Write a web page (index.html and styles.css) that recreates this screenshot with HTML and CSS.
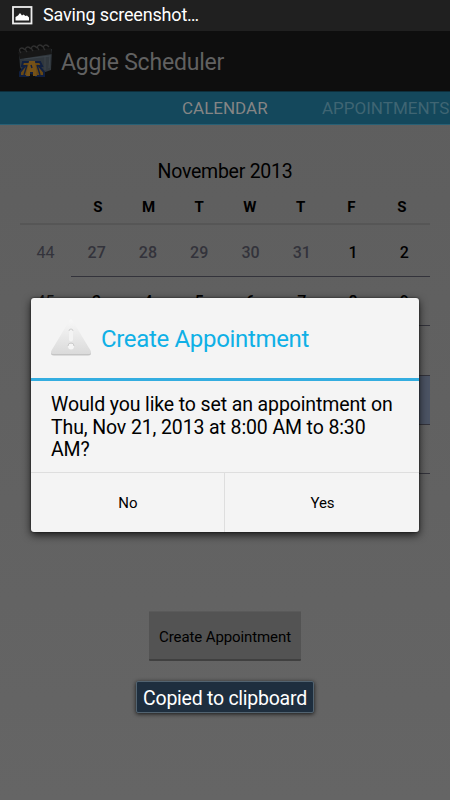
FILE: index.html
```
<!DOCTYPE html>
<html lang="en">
<head>
    <title>Aggie Scheduler</title>
    <meta charset="UTF-8" />
    <meta name="viewport" content="width=device-width, initial-scale=1.0" />
    <link rel="stylesheet" href="styles.css">
</head>
<body>
    <div class="status-bar">
        <svg class="status-icon" width="21" height="19" viewBox="0 0 21 19">
            <rect x="1" y="1" width="18.5" height="16.5" fill="#222" stroke="#eee" stroke-width="1.8"/>
            <path d="M3.500 14.500V11L6 9.500 8 7l2 2.500 1.500-1 2 1.500 1.500-.5L17 11.500v3z" fill="#fff"/>
        </svg>
        <span class="status-text">Saving screenshot…</span>
    </div>

    <header class="action-bar">
        <svg class="app-logo" width="38" height="36" viewBox="0 0 38 36">
            <path d="M2 8L35 5l-1 21-14 5-14-2-3-6z" fill="#30373d"/>
            <path d="M33 11l-1 13M28 12v14M7 15l26-3" stroke="#3c444b" stroke-width="1" fill="none"/>
            <path d="M1 8L34 4l1 6-32 5z" fill="#171717"/>
            <g fill="none" stroke="#303030" stroke-width="1.3">
                <path d="M4 9c-4-4 1-7 4-3M10 8c-4-4 1-7 4-3M16 7c-4-4 1-7 4-3M22 6c-4-4 1-7 4-3M28 6c-4-4 1-7 4-3"/>
            </g>
            <path d="M6 18h17l2 4h-3l5 6v4h-8l-1-3h-6l-1 3H3v-4l5-6H5z" fill="#694914" stroke="#101f40" stroke-width="2"/>
            <path d="M12 17h6l2 15h-4v-4h-3v4H9z" fill="#765218"/>
            <path d="M10 21L7 31M20 21l3 10M14 21l1 3" stroke="#101f40" stroke-width="1.400" fill="none"/>
        </svg>
        <h1 class="app-title">Aggie Scheduler</h1>
    </header>

    <nav class="tabs">
        <span class="tab tab-current">CALENDAR</span>
        <span class="tab tab-next">APPOINTMENTS</span>
    </nav>

    <main>
        <h2 class="month">November 2013</h2>
        <div class="weekdays">
            <span></span><span>S</span><span>M</span><span>T</span><span>W</span><span>T</span><span>F</span><span>S</span>
        </div>
        <div class="week week-first">
            <span class="week-number">44</span>
            <div class="days">
                <span class="other">27</span><span class="other">28</span><span class="other">29</span><span class="other">30</span><span class="other">31</span><span>1</span><span>2</span>
            </div>
        </div>
        <div class="week">
            <span class="week-number week-focused">45</span>
            <div class="days"><span>3</span><span>4</span><span>5</span><span>6</span><span>7</span><span>8</span><span>9</span></div>
        </div>
        <div class="week">
            <span class="week-number"></span>
            <div class="days"></div>
        </div>
        <div class="week">
            <span class="week-number"></span>
            <div class="days selected"></div>
        </div>
        <div class="week">
            <span class="week-number"></span>
            <div class="days"></div>
        </div>
        <button class="create-button">Create Appointment</button>
    </main>

    <div class="dialog">
        <div class="dialog-header">
            <svg width="42" height="38" viewBox="0 0 42 38">
                <defs>
                    <linearGradient id="alert" x1="0" y1="0" x2="0" y2="1">
                        <stop offset="0" stop-color="#f8f8f8"/>
                        <stop offset="1" stop-color="#dadada"/>
                    </linearGradient>
                </defs>
                <path d="M19.500 3Q21 1 22.500 3L40.500 33Q42 36.500 38 36.500H4Q0 36.500 1.500 33z" fill="#c4c4c4"/>
                <path d="M19.500 1.500Q21-1 22.500 1.500L40.500 31.500Q42 35 38 35H4Q0 35 1.500 31.500z" fill="url(#alert)"/>
                <rect x="19" y="10" width="4" height="12.500" rx="2" fill="#f3f3f3"/>
                <path d="M19 12q0-2 2-2t2 2" fill="none" stroke="#cfcfcf"/>
                <circle cx="21" cy="27.500" r="3" fill="#f5f5f5"/>
                <path d="M18 27q0-3 3-3t3 3" fill="none" stroke="#cbcbcb"/>
            </svg>
            <h2 class="dialog-title">Create Appointment</h2>
        </div>
        <p class="dialog-message">Would you like to set an appointment on<br>Thu, Nov 21, 2013 at 8:00 AM to 8:30<br>AM?</p>
        <div class="dialog-buttons">
            <button>No</button>
            <button>Yes</button>
        </div>
    </div>

    <div class="toast">Copied to clipboard</div>
</body>
</html>
```
FILE: styles.css
```
* {
    margin: 0;
    padding: 0;
    box-sizing: border-box;
}

body {
    position: relative;
    width: 450px;
    height: 800px;
    overflow: hidden;
    font-family: Roboto, sans-serif;
    color: #000;
    background: linear-gradient(#5d5d5d, #656565);
}

button {
    font-family: inherit;
    color: #000;
    border: none;
    background: none;
}

.status-bar {
    display: flex;
    align-items: center;
    height: 31px;
    padding: 0 0 2px 12px;
    background: #202020;
}

.status-icon {
    margin-top: 2px;
}

.status-text {
    margin-left: 10px;
    font-size: 18px;
    letter-spacing: -0.17px;
    color: #fff;
}

.action-bar {
    display: flex;
    align-items: center;
    height: 60px;
    padding-left: 17px;
    background: #0e0e0e;
}

.app-logo {
    margin-top: 2px;
}

.app-title {
    margin-left: 6px;
    padding-top: 2px;
    font-size: 23px;
    font-weight: 400;
    letter-spacing: -0.2px;
    color: #616161;
}

.tabs {
    display: flex;
    align-items: center;
    height: 34px;
    padding: 0 0 0 182px;
    font-size: 17px;
    background: #14485c;
    border-top: 1px solid #0d2e3b;
    border-bottom: 1px solid #286075;
}

.tab {
    white-space: nowrap;
}

.tab-current {
    width: 140px;
    color: #858585;
}

.tab-next {
    color: #3f6573;
}

main {
    display: flex;
    flex-direction: column;
    padding: 0 20px;
}

.month {
    height: 64px;
    padding-top: 35px;
    font-size: 19.5px;
    font-weight: 400;
    letter-spacing: -0.25px;
    line-height: 23px;
    text-align: center;
}

.weekdays {
    display: grid;
    grid-template-columns: 52.5px repeat(7, 50.7px);
    height: 36px;
    line-height: 36px;
    font-size: 15px;
    font-weight: 700;
    text-align: center;
    border-bottom: 2px solid #565656;
}

.week {
    display: flex;
    height: 49.3px;
    font-size: 16px;
}

.week-first {
    height: 52px;
    padding-top: 3px;
}

.week-number {
    width: 51px;
    line-height: 50px;
    text-align: center;
    color: #33333b;
}

.week-focused {
    color: #111;
}

.days {
    display: grid;
    grid-template-columns: repeat(7, 1fr);
    flex: 1;
    line-height: 50px;
    font-weight: 500;
    text-align: center;
    border-bottom: 1px solid #33333b;
}

.other {
    color: #33333b;
}

.selected {
    background: #4b5363;
}

.create-button {
    align-self: center;
    width: 152px;
    height: 50px;
    margin-top: 137px;
    padding-top: 2px;
    font-size: 15px;
    letter-spacing: -0.1px;
    background: #535353;
    border-top: 1px solid #5a5a5a;
    border-bottom: 2px solid #404040;
    border-radius: 1px;
}

/* Dialog */
.dialog {
    position: absolute;
    top: 298px;
    left: 31px;
    width: 388px;
    height: 234px;
    background: #f4f4f4;
    border-radius: 3px;
    box-shadow: 0 3px 9px rgba(0, 0, 0, 0.75), 0 0 2px rgba(0, 0, 0, 0.7);
}

.dialog-header {
    display: flex;
    align-items: center;
    height: 83px;
    padding-left: 19px;
    border-bottom: 3px solid #33ade0;
}

.dialog-title {
    margin-left: 9px;
    padding-top: 2px;
    font-size: 24px;
    font-weight: 400;
    letter-spacing: -0.33px;
    color: #0fb0e6;
}

.dialog-message {
    height: 91px;
    padding: 13px 0 0 20px;
    font-size: 19.5px;
    letter-spacing: -0.12px;
    line-height: 22.5px;
    white-space: nowrap;
}

.dialog-buttons {
    display: grid;
    grid-template-columns: 193px 1fr;
    height: 60px;
    border-top: 1px solid #dedede;
}

.dialog-buttons button {
    padding-left: 1px;
    font-size: 15px;
}

.dialog-buttons button + button {
    border-left: 1px solid #dedede;
}

.toast {
    position: absolute;
    top: 681px;
    left: 136px;
    width: 178px;
    height: 32px;
    font-size: 19.5px;
    letter-spacing: -0.25px;
    line-height: 33px;
    text-align: center;
    color: #fff;
    background: #1e2e3e;
    border: 1px solid #526370;
    border-radius: 2px;
    box-shadow: 0 1px 4px rgba(0, 0, 0, 0.8);
}
```
